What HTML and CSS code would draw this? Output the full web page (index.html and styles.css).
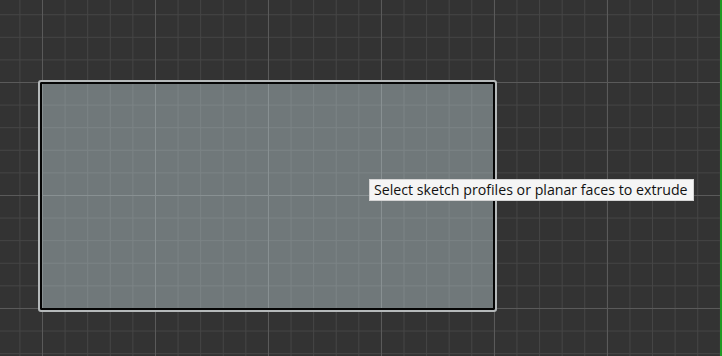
FILE: index.html
```html
<!DOCTYPE html>
<html>
<head>
<meta charset="utf-8">
<link rel="stylesheet" href="styles.css">
</head>
<body>
<div class="viewport">
  <div class="canvas">
    <div class="profile"></div>
    <div class="tooltip">Select sketch profiles or planar faces to extrude</div>
  </div>
  <div class="edge"></div>
</div>
</body>
</html>
```
FILE: styles.css
```css
html, body {
  margin: 0;
  padding: 0;
  background: #333333;
}
.viewport {
  display: flex;
  width: 722px;
  height: 356px;
  overflow: hidden;
}
.canvas {
  position: relative;
  flex: 1;
  height: 100%;
  background-color: #333333;
  background-image:
    linear-gradient(to right, #5a5a5a 1px, transparent 1px),
    linear-gradient(to bottom, #5a5a5a 1px, transparent 1px),
    linear-gradient(to right, #454545 1px, transparent 1px),
    linear-gradient(to bottom, #454545 1px, transparent 1px);
  background-size: 113px 113px, 113px 113px, 22.6px 22.6px, 22.6px 22.6px;
  background-position: 42px 82px, 42px 82px, 42px 82px, 42px 82px;
}
.edge {
  width: 2px;
  height: 100%;
  background: #1f9a22;
}
.profile {
  position: absolute;
  left: 38px;
  top: 80px;
  width: 455px;
  height: 228px;
  border: 2px solid #b5b9ba;
  border-radius: 3px;
  box-shadow: inset 0 0 0 2px #050505;
  background: rgba(205, 225, 230, 0.4);
}
.tooltip {
  position: absolute;
  left: 369px;
  top: 179px;
  width: 319px;
  height: 20px;
  box-sizing: content-box;
  border: 1px solid #d4d4d4;
  background: #f5f5f5;
  color: #111;
  font-family: "Open Sans", "Noto Sans", sans-serif;
  font-size: 14.2px;
  line-height: 20px;
  padding: 0 0 0 4px;
  white-space: nowrap;
}
```
